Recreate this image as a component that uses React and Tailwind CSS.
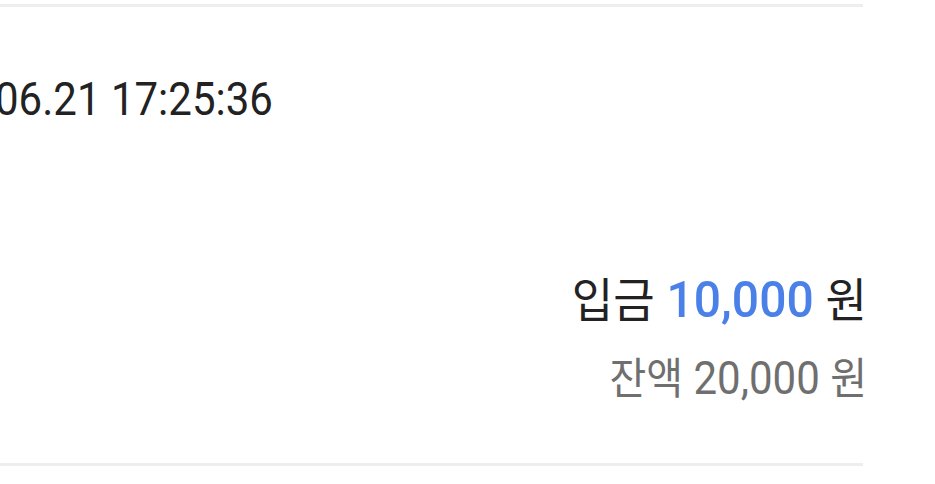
export default function App() {
  return (
    <div
      className="w-[935px] h-[484px] bg-white overflow-hidden pt-[4px]"
      style={{ fontFamily: "Roboto, 'Noto Sans CJK KR', sans-serif" }}
    >
      <div className="w-[863px] border-y-[3px] border-[#eeeeee] pt-[71px] pb-[63px]">
        <div className="ml-[-5px] text-[42px] leading-[44px] h-[44px] text-[#222222] whitespace-nowrap scale-y-[1.1] origin-center">
          06.21 17:25:36
        </div>
        <div className="mt-[154px] mr-[-4px] flex flex-col items-end">
          <div className="text-[48px] leading-[48px] h-[48px] text-[#222222] whitespace-nowrap scale-y-[1.04]">
            <span className="text-[45px]">입금</span>{" "}
            <span className="font-medium text-[#4a80e8]">10,000</span>{" "}
            <span className="text-[45px]">원</span>
          </div>
          <div className="mt-[34px] text-[42px] leading-[42px] h-[42px] text-[#6f6f6f] whitespace-nowrap scale-y-[1.08]">
            <span className="text-[40px]">잔액</span> 20,000{" "}
            <span className="text-[40px]">원</span>
          </div>
        </div>
      </div>
    </div>
  );
}
